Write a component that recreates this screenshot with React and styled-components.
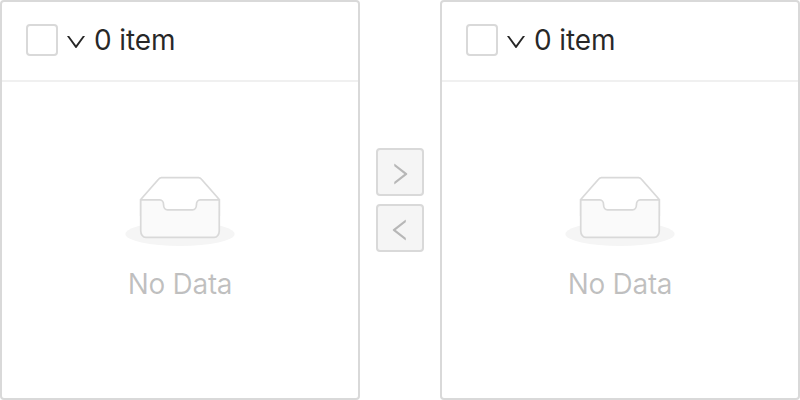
import React from 'react';
import styled, { createGlobalStyle } from 'styled-components';

const GlobalStyle = createGlobalStyle`
  *, *::before, *::after { box-sizing: border-box; }
  body { margin: 0; background: #fff; font-family: Inter, "Liberation Sans", sans-serif; }
`;

const Transfer = styled.div`
  display: flex;
  width: 800px;
  height: 400px;
`;

const Panel = styled.section`
  display: flex;
  flex-direction: column;
  width: 360px;
  height: 400px;
  border: 2px solid #d9d9d9;
  border-radius: 4px;
`;

const PanelHeader = styled.header`
  display: flex;
  align-items: center;
  height: 80px;
  padding: 0 24px 2px;
  border-bottom: 2px solid #f0f0f0;
`;

const Checkbox = styled.span`
  width: 32px;
  height: 32px;
  border: 2px solid #d9d9d9;
  border-radius: 4px;
`;

const HeaderIcon = styled.svg`
  display: block;
  margin: 4px 6px 0;
  width: 24px;
  height: 24px;
`;

const Count = styled.span`
  font-size: 28px;
  line-height: 44px;
  letter-spacing: -0.1px;
  color: rgba(0, 0, 0, 0.85);
  white-space: nowrap;
`;

const Empty = styled.div`
  display: flex;
  flex: 1;
  flex-direction: column;
  align-items: center;
  padding-top: 94px;
`;

const EmptyArt = styled.svg`
  display: block;
  width: 110px;
  height: 70px;
`;

const EmptyText = styled.p`
  margin: 16px 0 0;
  font-size: 28px;
  line-height: 44px;
  letter-spacing: -0.3px;
  color: rgba(0, 0, 0, 0.25);
`;

const Operations = styled.div`
  display: flex;
  flex-direction: column;
  justify-content: center;
  gap: 8px;
  margin: 0 16px;
`;

const MoveButton = styled.button`
  display: flex;
  align-items: center;
  justify-content: center;
  width: 48px;
  height: 48px;
  padding: 4px 0 0;
  border: 2px solid #d9d9d9;
  border-radius: 4px;
  background: #f5f5f5;
  color: rgba(0, 0, 0, 0.25);
`;

const ArrowIcon = styled.svg`
  display: block;
  flex: none;
  width: 28px;
  height: 28px;
`;

function Arrow({ direction }) {
  return (
    <ArrowIcon viewBox="0 0 1024 1024" fill="currentColor">
      {direction === 'right' ? (
        <path d="M765.7 486.8L314.9 134.7A7.97 7.97 0 00302 141v77.3c0 4.9 2.3 9.6 6.1 12.6l360 281.1-360 281.1c-3.9 3-6.1 7.7-6.1 12.6V883c0 6.7 7.7 10.4 12.9 6.3l450.8-352.1a31.96 31.96 0 000-50.4z" />
      ) : (
        <path d="M724 218.3V141c0-6.7-7.7-10.4-12.9-6.3L260.3 486.8a31.86 31.86 0 000 50.3l450.8 352.1c5.3 4.1 12.9.4 12.9-6.3v-77.3c0-4.9-2.3-9.6-6.1-12.6l-360-281 360-281.1c3.8-3 6.1-7.7 6.1-12.6z" />
      )}
    </ArrowIcon>
  );
}

function TransferList() {
  return (
    <Panel>
      <PanelHeader>
        <Checkbox role="checkbox" aria-checked="false" />
        <HeaderIcon viewBox="0 0 1024 1024" fill="rgba(0,0,0,.85)">
          <path d="M884 256h-75c-5.1 0-9.9 2.5-12.9 6.6L512 654.2 227.9 262.6c-3-4.1-7.8-6.6-12.9-6.6h-75c-6.5 0-10.3 7.4-6.5 12.7l352.6 486.1c12.8 17.6 39 17.6 51.7 0l352.6-486.1c3.9-5.3.1-12.7-6.4-12.7z" />
        </HeaderIcon>
        <Count>0 item</Count>
      </PanelHeader>
      <Empty>
        <EmptyArt viewBox="0 0 64 41">
          <g transform="translate(0 1)" fill="none" fillRule="evenodd">
            <ellipse fill="#f5f5f5" cx="32" cy="33" rx="32" ry="7" />
            <g fillRule="nonzero" stroke="#d9d9d9">
              <path d="M55 12.76L44.854 1.258C44.367.474 43.656 0 42.907 0H21.093c-.749 0-1.46.474-1.947 1.257L9 12.761V22h46v-9.24z" />
              <path d="M41.613 15.931c0-1.605.994-2.93 2.227-2.931H55v18.137C55 33.26 53.68 35 52.05 35h-40.1C10.32 35 9 33.259 9 31.137V13h11.16c1.233 0 2.227 1.323 2.227 2.928v.022c0 1.605 1.005 2.901 2.237 2.901h14.752c1.232 0 2.237-1.308 2.237-2.913v-.007z" fill="#fafafa" />
            </g>
          </g>
        </EmptyArt>
        <EmptyText>No Data</EmptyText>
      </Empty>
    </Panel>
  );
}

export default function App() {
  return (
    <>
      <GlobalStyle />
      <Transfer>
        <TransferList />
        <Operations>
          <MoveButton disabled aria-label="Move right"><Arrow direction="right" /></MoveButton>
          <MoveButton disabled aria-label="Move left"><Arrow direction="left" /></MoveButton>
        </Operations>
        <TransferList />
      </Transfer>
    </>
  );
}
